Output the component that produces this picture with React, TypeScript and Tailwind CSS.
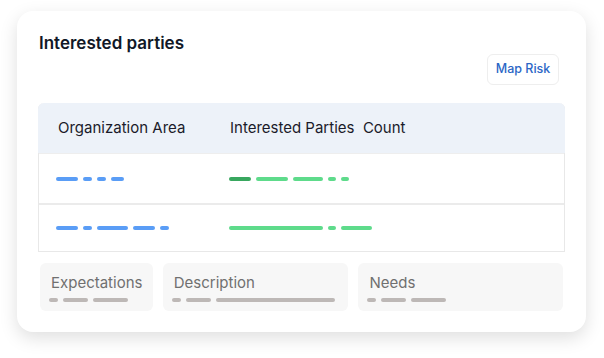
import React from "react";

const font = { fontFamily: "Inter, 'Noto Sans', sans-serif" };

function Dashes({ items, gap = 5 }: { items: [number, string][]; gap?: number }) {
  return (
    <div className="flex items-center" style={{ gap }}>
      {items.map(([w, c], i) => (
        <span key={i} className="block h-[4px] rounded-full" style={{ width: w, background: c }} />
      ))}
    </div>
  );
}

const B = "#5a9df6";
const G = "#5edb8b";
const DG = "#38a75f";
const GR = "#bdb8b6";

function Box({ label, w, dashes }: { label: string; w: string; dashes: [number, string][] }) {
  return (
    <div className={`${w} h-[48px] rounded-[6px] bg-[#f7f7f7] pt-[10px] pl-[9px]`}>
      <div className="ml-[2px] text-[15px] leading-[20px] text-[#707070]">{label}</div>
      <div className="mt-[5px]">
        <Dashes items={dashes} />
      </div>
    </div>
  );
}

export default function App() {
  return (
    <div className="w-[604px] h-[358px] bg-white pt-[11px] pl-[17px]" style={font}>
      <div className="w-[569px] h-[321px] rounded-[16px] bg-white shadow-[0_6px_18px_rgba(0,0,0,0.13)] pt-[20px] px-[21px]">
        <div className="text-[17px] leading-[24px] font-semibold text-[#111827] ml-[1px]">Interested parties</div>
        <div className="flex justify-end -mt-[1px] pr-[6px]">
          <div className="w-[72px] h-[31px] rounded-[6px] border border-[#eeeeee] flex items-center justify-center text-[12.5px] font-medium text-[#2b66c6]">
            Map Risk
          </div>
        </div>
        <div className="mt-[18px] rounded-t-[6px] border border-t-0 border-[#e8e8e8]">
          <div className="h-[50px] bg-[#edf2f9] rounded-t-[6px] flex items-center text-[15px] text-[#1b1b2a] -mx-px">
            <div className="w-[192px] pl-[20px]">Organization Area</div>
            <div className="whitespace-pre">Interested Parties  Count</div>
          </div>
          <div className="h-[50px] border-t border-[#eeeeee] flex items-center">
            <div className="w-[190px] pl-[17px]">
              <Dashes items={[[22, B], [9, B], [9, B], [13, B]]} />
            </div>
            <Dashes items={[[22, DG], [32, G], [30, G], [8, G], [8, G]]} />
          </div>
          <div className="h-[48px] border-t-2 border-[#ebebeb] flex items-center">
            <div className="w-[190px] pl-[17px]">
              <Dashes items={[[22, B], [9, B], [31, B], [22, B], [9, B]]} />
            </div>
            <Dashes items={[[94, G], [8, G], [31, G]]} />
          </div>
        </div>
        <div className="mt-[11px] px-[2px] flex gap-[10px]">
          <Box label="Expectations" w="w-[113px]" dashes={[[9, GR], [25, GR], [35, GR]]} />
          <Box label="Description" w="w-[186px]" dashes={[[9, GR], [25, GR], [119, GR]]} />
          <Box label="Needs" w="w-[205px]" dashes={[[9, GR], [25, GR], [35, GR]]} />
        </div>
      </div>
    </div>
  );
}
